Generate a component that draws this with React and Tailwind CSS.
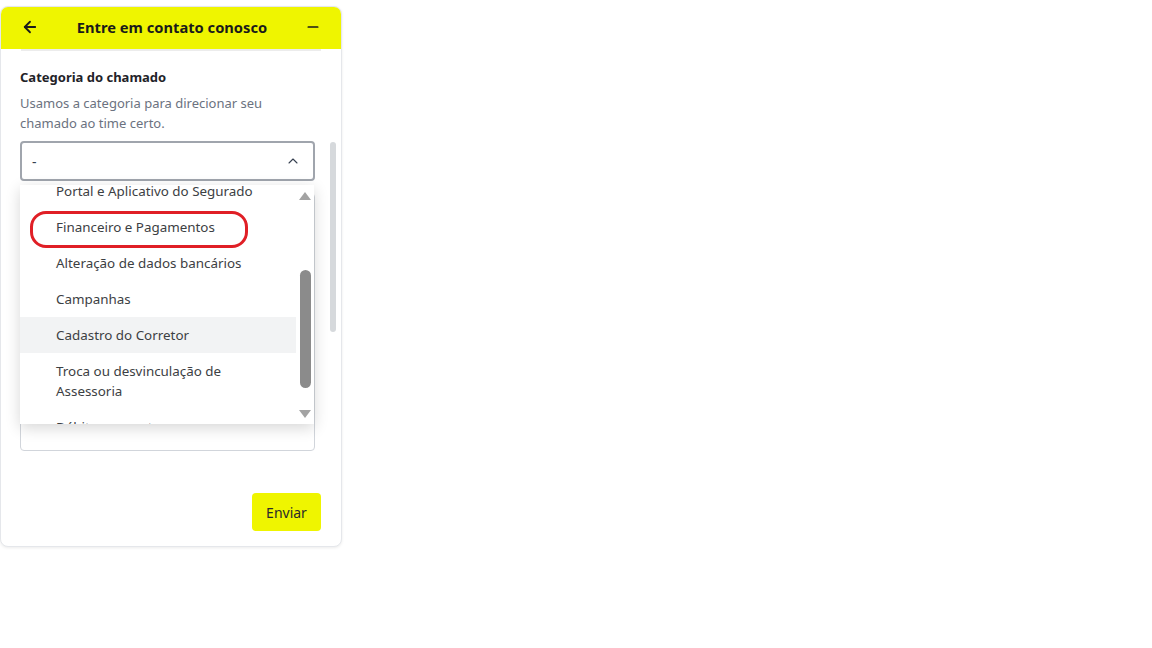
import React from 'react';
import { ArrowLeft, Minus, ChevronUp } from 'lucide-react';

const OPTIONS = [
  'Portal e Aplicativo do Segurado',
  'Financeiro e Pagamentos',
  'Alteração de dados bancários',
  'Campanhas',
  'Cadastro do Corretor',
  'Troca ou desvinculação de Assessoria',
  'Débito em conta',
];

const HOVERED = 'Cadastro do Corretor';

const CategoryMenu = () => (
  <div className="absolute left-[19px] top-[136px] w-[294px] h-[239px] bg-white shadow-[0_4px_14px_rgba(0,0,0,0.16)] overflow-hidden flex">
    <div className="flex-1 overflow-hidden">
      <ul className="-mt-[12px]">
        {OPTIONS.map((label) => (
          <li
            key={label}
            className={`pl-[36px] pr-[10px] py-[8px] text-[13.4px] leading-[20px] text-[#3c4043] ${label === HOVERED ? 'bg-[#f2f3f4]' : ''}`}
          >
            {label}
          </li>
        ))}
      </ul>
    </div>
    {/* native-looking scrollbar of the list */}
    <div className="w-[18px] flex flex-col items-center pt-[7px] pb-[6px]">
      <div className="w-0 h-0 border-l-[6px] border-r-[6px] border-b-[8px] border-l-transparent border-r-transparent border-b-[#a3a3a3]" />
      <div className="mt-[70px] w-[11px] h-[118px] rounded-full bg-[#8b8b8b]" />
      <div className="mt-auto w-0 h-0 border-l-[6px] border-r-[6px] border-t-[8px] border-l-transparent border-r-transparent border-t-[#a3a3a3]" />
    </div>
  </div>
);

const App = () => {
  return (
    <div className="w-full h-[648px] bg-white pt-[6px] font-['Noto_Sans','Liberation_Sans',sans-serif]">
      <div className="w-[342px] h-[541px] rounded-[8px] border border-[#e5e7eb] shadow-[0_1px_3px_rgba(0,0,0,0.08)] bg-white flex flex-col overflow-hidden">
        {/* header */}
        <header className="h-[42px] shrink-0 bg-[#eff500] flex items-center justify-between px-[20px] pb-[2px] text-[#1a1a1a]">
          <ArrowLeft size={18} strokeWidth={2.4} />
          <h1 className="text-[14.7px] font-bold">Entre em contato conosco</h1>
          <Minus size={16} strokeWidth={2.6} />
        </header>

        {/* scrolling body */}
        <div className="relative h-[429px] shrink-0">
          <div className="mx-[20px] h-[2px] bg-[#ececec]" />
          <div className="pl-[19px] pr-[26px] pt-[16px]">
            <h2 className="text-[13px] font-bold text-[#1f2328] leading-[20px]">Categoria do chamado</h2>
            <p className="mt-[6px] text-[13px] leading-[20px] text-[#6b7280]">
              Usamos a categoria para direcionar seu chamado ao time certo.
            </p>
            <div className="mt-[8px] h-[40px] rounded-[4px] border-2 border-[#a0a5ad] flex items-center justify-between pl-[10px] pr-[12px] text-[#374151]">
              <span className="text-[14px]">-</span>
              <ChevronUp size={16} strokeWidth={1.6} />
            </div>
            {/* field below, mostly covered by the open menu */}
            <div className="mt-[12px] h-[258px] rounded-[4px] border border-[#d1d5db]" />
          </div>

          <CategoryMenu />

          {/* annotation around the chosen option */}
          <div className="absolute left-[29px] top-[162px] w-[218px] h-[37px] rounded-[16px] border-[3px] border-[#e01f26]" />

          {/* body scrollbar */}
          <div className="absolute right-[5px] top-[93px] w-[6px] h-[190px] rounded-full bg-[#d6d9dc]" />
        </div>

        {/* footer */}
        <footer className="flex justify-end pt-[15px] pr-[20px]">
          <button className="w-[69px] h-[38px] rounded-[4px] bg-[#eff500] text-[14px] text-[#2a2a2a]">Enviar</button>
        </footer>
      </div>
    </div>
  );
};

export default App;
